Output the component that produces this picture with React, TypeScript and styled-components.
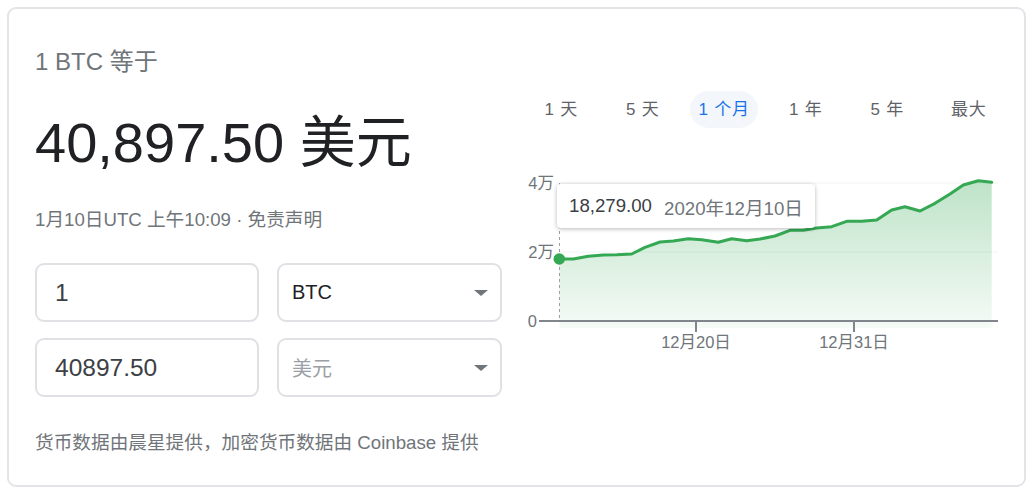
import React from 'react';
import styled, {createGlobalStyle} from 'styled-components';

const FONT = '"Liberation Sans", Arial, "Noto Sans CJK SC", sans-serif';

const RANGES = ['1 天', '5 天', '1 个月', '1 年', '5 年', '最大'];

const POINTS: Array<[number, number]> = [
    [39.3, 89], [53.3, 89], [68.3, 86.3], [83.3, 85], [96.7, 84.7], [111.7, 84],
    [125, 77.3], [140, 72], [153.3, 71], [168.3, 68.7], [181.7, 69.7], [198.3, 72.3],
    [211.7, 68.7], [226.7, 70.7], [240, 69], [255, 66], [270, 60.3], [283.3, 60.3],
    [296.7, 58], [311.7, 56.7], [326.7, 51.3], [341.7, 51.3], [356.7, 50], [371.7, 40],
    [385, 36.7], [400, 41], [415, 33.3], [430, 24], [443.3, 15], [458.3, 10.7], [471.7, 12.3],
];

const GlobalStyle = createGlobalStyle`
    html, body {
        margin: 0;
        background: #fff;
        font-family: ${FONT};
    }
`;

const Page = styled.div`
    padding: 7px 8px 0 7px;
`;

const Card = styled.div`
    box-sizing: border-box;
    width: 1019px;
    height: 480px;
    border: 2px solid #e3e4e8;
    border-radius: 9px;
    padding: 37px 15px 0 26px;
    display: flex;
    gap: 18px;
`;

const LeftColumn = styled.div`
    width: 467px;
    display: flex;
    flex-direction: column;
`;

const Header = styled.div`
    font-size: 24px;
    line-height: 32px;
    color: #70757a;
`;

const BigValue = styled.div`
    margin-top: 33px;
    font-size: 56px;
    line-height: 64px;
    color: #202124;
    white-space: nowrap;
`;

const Meta = styled.div`
    margin-top: 33px;
    font-size: 18.67px;
    line-height: 24px;
    color: #70757a;
`;

const Converter = styled.div`
    margin-top: 31px;
    display: grid;
    grid-template-columns: 224px 225px;
    column-gap: 18px;
    row-gap: 16px;
`;

const Field = styled.div`
    box-sizing: border-box;
    height: 59px;
    border: 2px solid #dfe1e5;
    border-radius: 9px;
    display: flex;
    align-items: center;
`;

const NumberInput = styled(Field)`
    padding-left: 18px;
    font-size: 24.5px;
    color: #3c4043;
`;

const Select = styled(Field)<{$muted?: boolean}>`
    padding: 0 12px 0 13px;
    justify-content: space-between;
    font-size: 20px;
    color: ${(p) => (p.$muted ? '#9aa0a6' : '#202124')};
`;

const Caret = styled.span`
    width: 0;
    height: 0;
    border-left: 7.5px solid transparent;
    border-right: 7.5px solid transparent;
    border-top: 6px solid #70757a;
`;

const Footer = styled.div`
    margin-top: 34px;
    font-size: 18.67px;
    line-height: 24px;
    color: #70757a;
`;

const RightColumn = styled.div`
    width: 489px;
    display: flex;
    flex-direction: column;
`;

const Tabs = styled.div`
    margin-top: 45px;
    display: grid;
    grid-template-columns: repeat(6, 1fr);
    justify-items: center;
`;

const Tab = styled.div<{$active?: boolean}>`
    height: 37px;
    line-height: 37px;
    padding: 0 8px 0 9px;
    border-radius: 19px;
    font-size: 17px;
    letter-spacing: 0.8px;
    white-space: nowrap;
    color: ${(p) => (p.$active ? '#1a73e8' : '#5f6368')};
    background: ${(p) => (p.$active ? '#f3f6fa' : 'transparent')};
`;

const ChartBox = styled.div`
    position: relative;
    margin-top: 42px;
    height: 190px;
`;

const Tooltip = styled.div`
    position: absolute;
    left: 37px;
    top: 14px;
    box-sizing: border-box;
    width: 258px;
    height: 44px;
    padding-left: 12px;
    display: flex;
    align-items: center;
    gap: 12px;
    background: #fff;
    border-radius: 4px;
    box-shadow: 0 1px 4px rgba(0, 0, 0, 0.28);
    font-size: 18.67px;
    white-space: nowrap;
`;

const TipValue = styled.span`
    color: #3c4043;
`;

const TipDate = styled.span`
    color: #70757a;
`;

const AxisText = styled.text`
    font-family: ${FONT};
    font-size: 16.5px;
    fill: #70757a;
`;

const linePath = POINTS.map(([x, y], i) => `${i ? 'L' : 'M'}${x},${y}`).join(' ');
const areaPath = `${linePath} L471.7,158 L39.3,158 Z`;

const PriceChart = () => (
    <ChartBox>
        <svg
            width='489'
            height='190'
            viewBox='0 0 489 190'
        >
            <defs>
                <linearGradient
                    id='fillGrad'
                    x1='0'
                    y1='0'
                    x2='0'
                    y2='1'
                >
                    <stop
                        offset='0%'
                        stopColor='#34a853'
                        stopOpacity='0.32'
                    />
                    <stop
                        offset='100%'
                        stopColor='#34a853'
                        stopOpacity='0.05'
                    />
                </linearGradient>
            </defs>
            <line
                x1='39'
                y1='13'
                x2='478'
                y2='13'
                stroke='#f1f3f4'
                strokeWidth='1'
            />
            <line
                x1='39'
                y1='82'
                x2='478'
                y2='82'
                stroke='#f1f3f4'
                strokeWidth='1'
            />
            <path
                d={areaPath}
                fill='url(#fillGrad)'
            />
            <line
                x1='39.5'
                y1='13'
                x2='39.5'
                y2='151'
                stroke='#9aa0a6'
                strokeWidth='1'
                strokeDasharray='3 3'
            />
            <path
                d={linePath}
                fill='none'
                stroke='#34a853'
                strokeWidth='3'
                strokeLinejoin='round'
                strokeLinecap='round'
            />
            <line
                x1='19'
                y1='151'
                x2='478'
                y2='151'
                stroke='#80868b'
                strokeWidth='2'
            />
            <line
                x1='176'
                y1='151'
                x2='176'
                y2='162'
                stroke='#80868b'
                strokeWidth='2'
            />
            <line
                x1='334'
                y1='151'
                x2='334'
                y2='162'
                stroke='#80868b'
                strokeWidth='2'
            />
            <circle
                cx='39.3'
                cy='89'
                r='5.8'
                fill='#34a853'
            />
            <AxisText
                x='34'
                y='13'
                textAnchor='end'
                dominantBaseline='central'
            >
                {'4万'}
            </AxisText>
            <AxisText
                x='34'
                y='82'
                textAnchor='end'
                dominantBaseline='central'
            >
                {'2万'}
            </AxisText>
            <AxisText
                x='17'
                y='151'
                textAnchor='end'
                dominantBaseline='central'
            >
                {'0'}
            </AxisText>
            <AxisText
                x='176'
                y='172'
                textAnchor='middle'
                dominantBaseline='central'
            >
                {'12月20日'}
            </AxisText>
            <AxisText
                x='334'
                y='172'
                textAnchor='middle'
                dominantBaseline='central'
            >
                {'12月31日'}
            </AxisText>
        </svg>
        <Tooltip>
            <TipValue>{'18,279.00'}</TipValue>
            <TipDate>{'2020年12月10日'}</TipDate>
        </Tooltip>
    </ChartBox>
);

const App = () => (
    <>
        <GlobalStyle/>
        <Page>
            <Card>
                <LeftColumn>
                    <Header>{'1 BTC 等于'}</Header>
                    <BigValue>{'40,897.50 美元'}</BigValue>
                    <Meta>{'1月10日UTC 上午10:09 · 免责声明'}</Meta>
                    <Converter>
                        <NumberInput>{'1'}</NumberInput>
                        <Select>
                            {'BTC'}
                            <Caret/>
                        </Select>
                        <NumberInput>{'40897.50'}</NumberInput>
                        <Select $muted={true}>
                            {'美元'}
                            <Caret/>
                        </Select>
                    </Converter>
                    <Footer>{'货币数据由晨星提供，加密货币数据由 Coinbase 提供'}</Footer>
                </LeftColumn>
                <RightColumn>
                    <Tabs>
                        {RANGES.map((r) => (
                            <Tab
                                key={r}
                                $active={r === '1 个月'}
                            >
                                {r}
                            </Tab>
                        ))}
                    </Tabs>
                    <PriceChart/>
                </RightColumn>
            </Card>
        </Page>
    </>
);

export default App;
